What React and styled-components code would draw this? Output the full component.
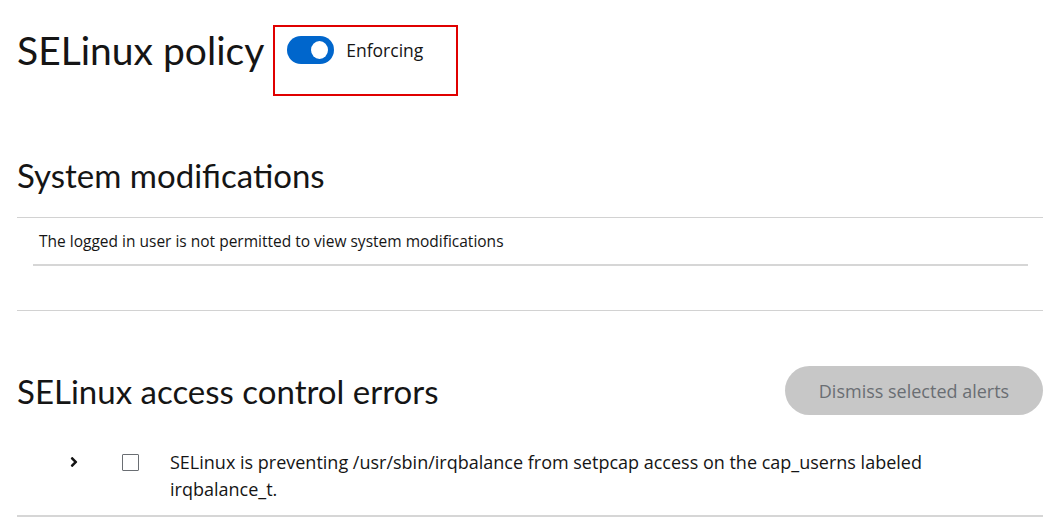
import styled, { createGlobalStyle } from "styled-components";
import { FaAngleRight } from "react-icons/fa";

const GlobalStyle = createGlobalStyle`
  html, body {
    margin: 0;
    padding: 0;
    background: #ffffff;
  }

  body {
    font-family: "Open Sans", "Liberation Sans", sans-serif;
    color: #151515;
  }
`;

const Page = styled.div`
  width: 1026px;
  padding: 25px 15px 0 17px;
`;

const PolicyRow = styled.div`
  display: flex;
  align-items: flex-start;
`;

const PageTitle = styled.h1`
  margin: 3px 0 0;
  font-family: "Lato", "Open Sans", sans-serif;
  font-size: 39px;
  font-weight: 400;
  line-height: 44px;
`;

const Highlight = styled.div`
  box-sizing: border-box;
  width: 185px;
  height: 71px;
  margin-left: 9px;
  padding: 9px 0 0 12px;
  border: 2px solid #e00000;
`;

const SwitchLabel = styled.label`
  display: flex;
  align-items: center;
  gap: 12px;
  height: 28px;
  font-size: 17.5px;
`;

const Switch = styled.span`
  position: relative;
  display: inline-block;
  width: 47px;
  height: 28px;
  border-radius: 14px;
  background: ${(p) => (p.$on ? "#0066cc" : "#8a8d90")};

  &::after {
    content: "";
    position: absolute;
    top: 5px;
    ${(p) => (p.$on ? "right: 6px;" : "left: 6px;")}
    width: 17px;
    height: 18px;
    border-radius: 50%;
    background: #ffffff;
  }
`;

const Section = styled.section`
  margin-top: ${(p) => p.$top}px;
  border-bottom: ${(p) => (p.$divider ? "1px solid #d2d2d2" : "none")};
  padding-bottom: ${(p) => p.$bottom || 0}px;
`;

const SectionHeader = styled.div`
  display: flex;
  justify-content: space-between;
  align-items: center;
  min-height: 49px;
`;

const SectionTitle = styled.h2`
  margin: 0;
  font-family: "Lato", "Open Sans", sans-serif;
  font-size: 33px;
  font-weight: 400;
  line-height: 40px;
`;

const Table = styled.div`
  margin-top: 22px;
  border-top: 1px solid #d2d2d2;
`;

const EmptyRow = styled.div`
  display: flex;
  align-items: center;
  height: 46px;
  margin: 0 15px 0 16px;
  padding-left: 6px;
  border-bottom: 2px solid #d6d6d6;
  font-size: 15.5px;
`;

const DismissButton = styled.button`
  width: 258px;
  height: 49px;
  border: none;
  border-radius: 25px;
  background: #c7c7c7;
  color: #6a6e73;
  font-family: "Open Sans", "Liberation Sans", sans-serif;
  font-size: 18px;
`;

const AlertList = styled.div`
  margin-top: 22px;
`;

const AlertRow = styled.div`
  display: flex;
  align-items: flex-start;
  padding: 12px 0 12px;
  border-bottom: 2px solid #d6d6d6;
`;

const Toggle = styled.span`
  display: flex;
  align-items: center;
  justify-content: center;
  width: 14px;
  height: 26px;
  margin-left: 50px;
  color: #151515;
  font-size: 16px;
`;

const Check = styled.span`
  box-sizing: border-box;
  width: 17px;
  height: 17px;
  margin: 5px 0 0 41px;
  border: 1px solid #6a6e73;
  border-radius: 1px;
`;

const AlertText = styled.p`
  margin: 0 0 0 31px;
  max-width: 790px;
  font-size: 18px;
  line-height: 27px;
`;

export default function App() {
  return (
    <>
      <GlobalStyle />
      <Page>
        <PolicyRow>
          <PageTitle>SELinux policy</PageTitle>
          <Highlight>
            <SwitchLabel>
              <Switch $on />
              Enforcing
            </SwitchLabel>
          </Highlight>
        </PolicyRow>

        <Section $top={59} $divider $bottom={44}>
          <SectionTitle>System modifications</SectionTitle>
          <Table>
            <EmptyRow>
              The logged in user is not permitted to view system modifications
            </EmptyRow>
          </Table>
        </Section>

        <Section $top={55}>
          <SectionHeader>
            <SectionTitle>SELinux access control errors</SectionTitle>
            <DismissButton disabled>Dismiss selected alerts</DismissButton>
          </SectionHeader>
          <AlertList>
            <AlertRow>
              <Toggle>
                <FaAngleRight />
              </Toggle>
              <Check />
              <AlertText>
                SELinux is preventing /usr/sbin/irqbalance from setpcap access on
                the cap_userns labeled irqbalance_t.
              </AlertText>
            </AlertRow>
          </AlertList>
        </Section>
      </Page>
    </>
  );
}
